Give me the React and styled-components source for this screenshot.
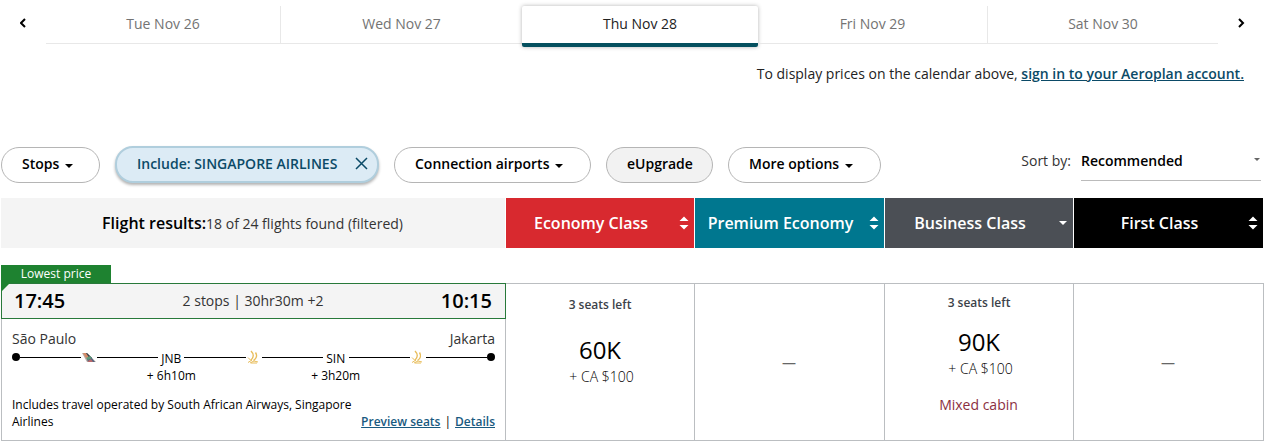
import React from "react";
import styled, { createGlobalStyle, css } from "styled-components";

const GlobalStyle = createGlobalStyle`
  * {
    box-sizing: border-box;
  }

  body {
    margin: 0;
    background: #fff;
    color: #000;
    font-family: "Open Sans", "Noto Sans", sans-serif;
    font-size: 14px;
  }
`;

const Page = styled.div`
  width: 1265px;
  height: 441px;
  padding-left: 1px;
  overflow: hidden;
`;

/* calendar */
const Calendar = styled.div`
  display: flex;
  height: 48px;
  padding-top: 6px;
`;

const Arrow = styled.button`
  display: flex;
  align-items: center;
  justify-content: center;
  width: ${({ $width }) => $width}px;
  height: 34px;
  padding: 0;
  border: 0;
  background: none;
`;

const Day = styled.div`
  display: flex;
  align-items: center;
  justify-content: center;
  width: ${({ $width }) => $width}px;
  height: 38px;
  padding-bottom: 2px;
  border-bottom: 1px solid #e8e8e8;
  border-right: ${({ $divider }) => ($divider ? "1px solid #e8e8e8" : "0")};
  color: #737373;

  ${({ $active }) =>
    $active &&
    css`
      height: 41px;
      border-bottom: 4px solid #05505f;
      border-radius: 2px;
      box-shadow: 0 0 4px rgba(0, 0, 0, 0.3);
      color: #222;
    `}
`;

const SignIn = styled.p`
  height: 20px;
  margin: 16px 21px 0 0;
  line-height: 20px;
  text-align: right;
  color: #222;
`;

const Link = styled.a`
  color: #0b4a67;
  font-weight: 600;
  text-decoration: underline;
`;

/* filters */
const Toolbar = styled.div`
  display: flex;
  align-items: flex-start;
  height: 52px;
  margin-top: 62px;
`;

const Chip = styled.button`
  display: flex;
  align-items: center;
  width: ${({ $width }) => $width}px;
  height: 36px;
  margin: 1px 15px 0 0;
  padding: 0 0 3px 20px;
  border: 1px solid #b5b5b5;
  border-radius: 18px;
  background: ${({ $filled }) => ($filled ? "#f2f2f2" : "#fff")};
  color: #000;
  font: inherit;
  font-weight: 600;
  white-space: nowrap;

  ${({ $selected }) =>
    $selected &&
    css`
      height: 37px;
      margin-top: 0;
      padding-right: 9px;
      justify-content: space-between;
      border: 2px solid #b0cedd;
      background: #dcebf5;
      box-shadow: 0 2px 3px rgba(0, 0, 0, 0.3);
      color: #0b4a67;
    `}
`;

const Caret = styled.span`
  width: 0;
  height: 0;
  margin: 4px 0 0 6px;
  border: 4px solid transparent;
  border-top-color: #000;
  border-bottom: 0;
`;

const SortLabel = styled.span`
  margin: 5px 10px 0 auto;
  line-height: 20px;
  color: #333;
`;

const SortSelect = styled.div`
  display: flex;
  align-items: center;
  justify-content: space-between;
  width: 180px;
  height: 35px;
  margin-right: 4px;
  padding-bottom: 6px;
  border-bottom: 1px solid #bbb;
  font-weight: 600;

  ${Caret} {
    margin: 0 1px 2px 0;
    border-width: 3px 3px 0;
    border-top-color: #666;
  }
`;

/* results */
const ResultHeader = styled.div`
  display: grid;
  grid-template-columns: 504px 188px 189px 188px 189px;
  column-gap: 1px;
  height: 50px;
`;

const ResultTitle = styled.div`
  display: flex;
  align-items: center;
  justify-content: center;
  padding-right: 1px;
  background: #f4f4f4;
  color: #333;

  strong {
    color: #000;
    font-size: 16px;
    font-weight: 600;
  }
`;

const CabinHeader = styled.div`
  display: flex;
  align-items: center;
  padding-right: 5px;
  background: ${({ $color }) => $color};
  color: #fff;
  font-size: 16px;
  font-weight: 600;
`;

const CabinName = styled.span`
  flex: 1;
  padding-right: 3px;
  text-align: center;
  white-space: nowrap;
`;

const Tag = styled.div`
  width: 110px;
  height: 18px;
  margin-top: 17px;
  background: #1e8230;
  color: #fff;
  font-size: 12px;
  line-height: 18px;
  text-align: center;
`;

const Row = styled.div`
  display: grid;
  grid-template-columns: 504px 189px 190px 189px 189px;
  width: 1263px;
  height: 158px;
  border: 1px solid #bbbec1;
`;

const Flight = styled.div`
  border-right: 1px solid #bbbec1;
`;

const Times = styled.div`
  position: relative;
  display: flex;
  align-items: center;
  justify-content: space-between;
  width: 505px;
  height: 36px;
  margin: -1px 0 0 -1px;
  padding: 0 13px 2px 12px;
  border: 1px solid #28793a;
  background: #f4f4f4;
  color: #333;
`;

const Corner = styled.svg`
  position: absolute;
  top: -1px;
  left: -1px;
`;

const Time = styled.span`
  color: #000;
  font-size: 20px;
  font-weight: 600;
`;

const Cities = styled.div`
  display: flex;
  justify-content: space-between;
  padding: 11px 10px 0;
  line-height: 18px;
  color: #333;
`;

const Route = styled.div`
  display: flex;
  align-items: center;
  height: 18px;
  padding: 0 10px;
  font-size: 12px;
`;

const Dot = styled.span`
  width: 8px;
  height: 8px;
  border-radius: 50%;
  background: #000;
`;

const Line = styled.span`
  flex: 1;
  height: 1px;
  background: #000;
`;

const Stop = styled.span`
  position: relative;
  width: 26px;
  padding-top: 2px;
  text-align: center;
`;

const Layover = styled.span`
  position: absolute;
  top: 19px;
  left: 50%;
  transform: translateX(-50%);
  white-space: nowrap;
`;

const Carrier = styled.svg`
  margin: 0 1px;
`;

const Footer = styled.div`
  display: flex;
  align-items: flex-end;
  justify-content: space-between;
  padding: 30px 10px 0;
  font-size: 12px;
  line-height: 17px;
`;

const Operated = styled.span`
  width: 345px;
`;

const FlightLinks = styled.span`
  display: flex;
  gap: 4px;

  ${Link} {
    color: #185a80;
  }
`;

const Fare = styled.div`
  display: flex;
  flex-direction: column;
  align-items: center;
  padding-top: ${({ $top }) => $top}px;
  border-right: ${({ $last }) => ($last ? "0" : "1px solid #bbbec1")};
`;

const Seats = styled.span`
  color: #3c4249;
  font-size: 12px;
  font-weight: 600;
  line-height: 16px;
`;

const Points = styled.span`
  margin-top: ${({ $top }) => $top}px;
  font-size: 24px;
  line-height: 30px;
`;

const Cash = styled.span`
  margin-top: 3px;
  padding-left: 3px;
  color: #000;
  font-weight: 300;
  line-height: 18px;
`;

const Mixed = styled.span`
  margin-top: 18px;
  padding-right: 1px;
  color: #8b2f3f;
  line-height: 18px;
`;

const Dash = styled.span`
  padding-right: 1px;
  color: #666;
  line-height: 18px;
`;

const days = [
  { label: "Tue Nov 26", width: 235, divider: true },
  { label: "Wed Nov 27", width: 241 },
  { label: "Thu Nov 28", width: 236, active: true },
  { label: "Fri Nov 29", width: 230, divider: true },
  { label: "Sat Nov 30", width: 230 },
];

const cabins = [
  { name: "Economy Class", color: "#d8292f" },
  { name: "Premium Economy", color: "#00778f" },
  { name: "Business Class", color: "#4b4f55", sorted: true },
  { name: "First Class", color: "#000" },
];

function Chevron({ right }) {
  return (
    <svg width="8" height="10" viewBox="0 0 8 10" fill="none" stroke="#000" strokeWidth="2">
      <path d={right ? "M2 1l4 4-4 4" : "M5 1L1 5l4 4"} />
    </svg>
  );
}

function SortIcon({ sorted }) {
  return (
    <svg width="10" height="14" viewBox="0 0 10 14" fill="#fff">
      {sorted ? (
        <path d="M1 5h8L5 9z" />
      ) : (
        <path d="M.5 5h9L5 .5zM.5 9h9L5 13.5z" />
      )}
    </svg>
  );
}

function SouthAfrican() {
  return (
    <Carrier width="14" height="14" viewBox="0 0 14 14">
      <path d="M0 3h5l9 9H5z" fill="#b9aaa2" />
      <path d="M1 3h3l4 3-4 2z" fill="#d58a67" />
      <path d="M4 3h1l5 5-2 1z" fill="#2d3f4c" />
      <path d="M5 9l4-2 4 5H6z" fill="#4f6480" />
      <path d="M4 8l4-2 2 2-4 2z" fill="#5c9a78" />
      <path d="M6 11l3-2 2 3H6z" fill="#b9696b" />
    </Carrier>
  );
}

function Singapore() {
  return (
    <Carrier width="14" height="14" viewBox="0 0 14 14" fill="none" stroke="#e8bd5b">
      <path d="M4 1c3 3 3 6 0 9" strokeWidth="1.4" />
      <path d="M8.500 2.500c2 3 1 6-2 8" strokeWidth="1.4" />
      <path d="M1 7.500l3 3M1 12.500l4-2.500M3 13l4-2 4 1M4 13h6" />
    </Carrier>
  );
}

function App() {
  return (
    <Page>
      <GlobalStyle />
      <Calendar>
        <Arrow $width={45}>
          <Chevron />
        </Arrow>
        {days.map((day) => (
          <Day key={day.label} $width={day.width} $divider={day.divider} $active={day.active}>
            {day.label}
          </Day>
        ))}
        <Arrow $width={46}>
          <Chevron right />
        </Arrow>
      </Calendar>
      <SignIn>
        To display prices on the calendar above, <Link>sign in to your Aeroplan account.</Link>
      </SignIn>

      <Toolbar>
        <Chip $width={99}>
          Stops <Caret />
        </Chip>
        <Chip $width={264} $selected>
          Include: SINGAPORE AIRLINES
          <svg width="13" height="13" viewBox="0 0 13 13" stroke="#0b4a67" strokeWidth="1.5">
            <path d="M1 1l11 11M12 1L1 12" />
          </svg>
        </Chip>
        <Chip $width={197}>
          Connection airports <Caret />
        </Chip>
        <Chip $width={107} $filled>
          eUpgrade
        </Chip>
        <Chip $width={153}>
          More options <Caret />
        </Chip>
        <SortLabel>Sort by:</SortLabel>
        <SortSelect>
          Recommended <Caret />
        </SortSelect>
      </Toolbar>

      <ResultHeader>
        <ResultTitle>
          <strong>Flight results:</strong>18 of 24 flights found (filtered)
        </ResultTitle>
        {cabins.map((cabin) => (
          <CabinHeader key={cabin.name} $color={cabin.color}>
            <CabinName>{cabin.name}</CabinName>
            <SortIcon sorted={cabin.sorted} />
          </CabinHeader>
        ))}
      </ResultHeader>

      <Tag>Lowest price</Tag>
      <Row>
        <Flight>
          <Times>
            <Corner width="9" height="9">
              <path d="M0 0h9L0 9z" fill="#1e8230" />
            </Corner>
            <Time>17:45</Time>
            <span>2 stops | 30hr30m +2</span>
            <Time>10:15</Time>
          </Times>
          <Cities>
            <span>São Paulo</span>
            <span>Jakarta</span>
          </Cities>
          <Route>
            <Dot />
            <Line />
            <SouthAfrican />
            <Line />
            <Stop>
              JNB
              <Layover>+ 6h10m</Layover>
            </Stop>
            <Line />
            <Singapore />
            <Line />
            <Stop>
              SIN
              <Layover>+ 3h20m</Layover>
            </Stop>
            <Line />
            <Singapore />
            <Line />
            <Dot />
          </Route>
          <Footer>
            <Operated>
              Includes travel operated by South African Airways, Singapore Airlines
            </Operated>
            <FlightLinks>
              <Link>Preview seats</Link>
              <span>|</span>
              <Link>Details</Link>
            </FlightLinks>
          </Footer>
        </Flight>
        <Fare $top={13}>
          <Seats>3 seats left</Seats>
          <Points $top={22}>60K</Points>
          <Cash>+ CA $100</Cash>
        </Fare>
        <Fare $top={70}>
          <Dash>—</Dash>
        </Fare>
        <Fare $top={11}>
          <Seats>3 seats left</Seats>
          <Points $top={16}>90K</Points>
          <Cash>+ CA $100</Cash>
          <Mixed>Mixed cabin</Mixed>
        </Fare>
        <Fare $top={70} $last>
          <Dash>—</Dash>
        </Fare>
      </Row>
    </Page>
  );
}

export default App;
